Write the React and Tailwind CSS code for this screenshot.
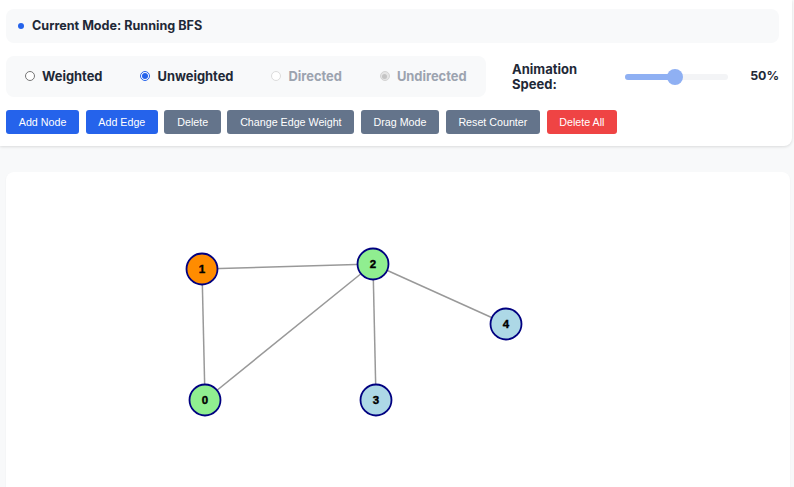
import React from 'react';

const nodes = [
  { id: 0, x: 199, y: 228, fill: '#90ee90' },
  { id: 1, x: 196, y: 97, fill: '#ff8c00' },
  { id: 2, x: 367, y: 92, fill: '#90ee90' },
  { id: 3, x: 370, y: 228, fill: '#add8e6' },
  { id: 4, x: 500, y: 152, fill: '#add8e6' },
];

const edges = [
  [1, 2],
  [1, 0],
  [2, 0],
  [2, 3],
  [2, 4],
];

function Radio({ label, checked, disabled }) {
  let circle;
  if (disabled && checked) {
    circle = (
      <span className="flex h-[10px] w-[10px] items-center justify-center rounded-full border border-[#d4d4d4] bg-[#e5e5e5]">
        <span className="h-[5px] w-[5px] rounded-full bg-[#c4c4c4]" />
      </span>
    );
  } else if (disabled) {
    circle = <span className="h-[10px] w-[10px] rounded-full border border-[#dcdcdc] bg-white" />;
  } else if (checked) {
    circle = (
      <span className="flex h-[10px] w-[10px] items-center justify-center rounded-full border border-[#2563eb] bg-white">
        <span className="h-[6px] w-[6px] rounded-full bg-[#2563eb]" />
      </span>
    );
  } else {
    circle = <span className="h-[10px] w-[10px] rounded-full border border-[#767676] bg-white" />;
  }
  return (
    <label className="flex items-center gap-[7px]">
      {circle}
      <span
        className={
          'text-[12.9px] font-bold ' + (disabled ? 'text-[#9ca3af]' : 'text-[#1f2937]')
        }
      >
        {label}
      </span>
    </label>
  );
}

function Btn({ children, color }) {
  return (
    <button
      className={
        'h-[24px] rounded-[3px] px-[12.8px] text-[10.7px] text-white font-["Liberation_Sans",Arial,sans-serif] ' +
        color
      }
    >
      {children}
    </button>
  );
}

export default function App() {
  return (
    <div className="min-h-screen bg-[#f8f9fa] font-['Inter',sans-serif] text-[#1f2937]">
      <div className="w-[792px] rounded-br-lg bg-white pb-[12px] pl-[6px] pr-[13px] pt-[9px] shadow-[0_1px_3px_rgba(0,0,0,0.12)]">
        <div className="flex h-[34px] items-center gap-[8px] rounded-lg bg-[#f8f9fa] pl-[12px]">
          <span className="h-[6px] w-[6px] rounded-full bg-[#2563eb]" />
          <span className="text-[12.6px] font-bold">Current Mode: Running BFS</span>
        </div>

        <div className="mt-[13px] flex items-center">
          <div className="flex h-[41px] w-[480px] items-center gap-[38px] rounded-lg bg-[#f8f9fa] px-[19px]">
            <Radio label="Weighted" />
            <Radio label="Unweighted" checked />
            <Radio label="Directed" disabled />
            <Radio label="Undirected" disabled checked />
          </div>
          <div className="ml-[26px] w-[100px] text-[13px] font-bold leading-[15px]">
            Animation Speed:
          </div>
          <div className="relative ml-[13px] h-[6px] w-[103px] rounded-full bg-[#f3f4f6]">
            <div className="h-[6px] w-[52px] rounded-full bg-[#8fb0f3]" />
            <div className="absolute left-[42px] top-[-5px] h-[16px] w-[16px] rounded-full bg-[#8fb0f3]" />
          </div>
          <div className="ml-auto text-[12.4px] font-bold">50%</div>
        </div>

        <div className="mt-[13px] flex gap-[6.4px]">
          <Btn color="bg-[#2563eb]">Add Node</Btn>
          <Btn color="bg-[#2563eb]">Add Edge</Btn>
          <Btn color="bg-[#64748b]">Delete</Btn>
          <Btn color="bg-[#64748b]">Change Edge Weight</Btn>
          <Btn color="bg-[#64748b]">Drag Mode</Btn>
          <Btn color="bg-[#64748b]">Reset Counter</Btn>
          <Btn color="bg-[#ef4444]">Delete All</Btn>
        </div>
      </div>

      <div className="mx-[6px] mt-[26px] h-[400px] w-[784px] rounded-lg bg-white shadow-[0_1px_2px_rgba(0,0,0,0.05)]">
        <svg width="784" height="400">
          {edges.map(([a, b]) => (
            <line
              key={a + '-' + b}
              x1={nodes[a].x}
              y1={nodes[a].y}
              x2={nodes[b].x}
              y2={nodes[b].y}
              stroke="#999"
              strokeWidth="1.5"
            />
          ))}
          {nodes.map((n) => (
            <g key={n.id}>
              <circle cx={n.x} cy={n.y} r="15.5" fill={n.fill} stroke="#000080" strokeWidth="1.8" />
              <text
                x={n.x}
                y={n.y + 4}
                textAnchor="middle"
                fontSize="11.5"
                fontWeight="bold"
                fontFamily="Liberation Sans, Arial, sans-serif"
                fill="#000"
                stroke="#000"
                strokeWidth="0.4"
              >
                {n.id}
              </text>
            </g>
          ))}
        </svg>
      </div>
    </div>
  );
}
